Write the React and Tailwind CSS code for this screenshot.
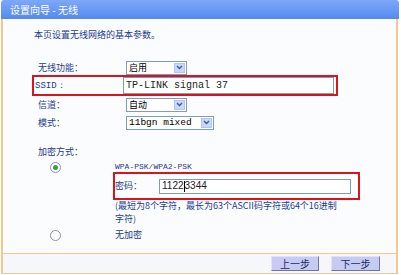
import React from 'react';

const cjk = "font-['Noto_Sans_CJK_SC',sans-serif]";
const mono = "font-['Liberation_Mono',monospace]";

const Arrow = () => (
  <div className="w-[11px] h-[10px] mr-[1px] bg-[#c9d8fa] border border-[#b3c6f0] flex items-center justify-center">
    <svg width="7" height="5" viewBox="0 0 7 5">
      <path d="M1 1 L3.5 3.5 L6 1" fill="none" stroke="#3d5a94" strokeWidth="1.4" />
    </svg>
  </div>
);

const Select = ({ value, width, font }) => (
  <div className={`${width} h-[14px] bg-white border border-[#7f9db9] flex items-center justify-between`}>
    <span className={`pl-[2px] text-black ${font}`}>{value}</span>
    <Arrow />
  </div>
);

const Radio = ({ checked }) => (
  <div className="w-[11px] h-[11px] rounded-full border border-[#8393ad] bg-white flex items-center justify-center">
    {checked && <div className="w-[5px] h-[5px] rounded-full bg-[#3c9f45]" />}
  </div>
);

const Row = ({ label, children }) => (
  <div className="flex items-center h-[15px] ml-[32px]">
    <div className="w-[91px] pl-[3px]">{label}</div>
    {children}
  </div>
);

export default function App() {
  return (
    <div className={`w-[401px] h-[275px] bg-white flex flex-col text-[9px] leading-[12px] text-[#1d3b8c] ${cjk}`}>
      <div className="h-[19px] ml-[1px] w-[398px] rounded-t-[3px] bg-gradient-to-b from-[#7ea8f8] to-[#5489ee] flex items-center pl-[9px] text-white text-[10px]">
        设置向导 - 无线
      </div>
      <div className="ml-[1px] w-[397px] flex-1 flex flex-col border-x-2 border-[#f3c88f]">
        <div className="flex-1 bg-[#fbfcfe] flex flex-col">
          <div className="mt-[10px] ml-[31px] h-[12px]">本页设置无线网络的基本参数。</div>
          <div className="mt-[19px]">
            <Row label="无线功能：">
              <Select value="启用" width="w-[61px]" font="" />
            </Row>
            <div className="ml-[29px] w-[306px] h-[21px] border-2 border-[#d6151f] flex items-center">
              <div className={`w-[89px] pl-[1px] ${mono} text-[9px]`}>SSID：</div>
              <div className={`w-[211px] h-[17px] bg-white border border-[#7f9db9] flex items-center pl-[2px] text-[#222] ${mono} text-[10px]`}>
                TP-LINK signal 37
              </div>
            </div>
            <div className="h-[1px]" />
            <Row label="信道：">
              <Select value="自动" width="w-[61px]" font="" />
            </Row>
            <div className="h-[3px]" />
            <Row label="模式：">
              <Select value="11bgn mixed" width="w-[88px]" font={`${mono} text-[9.5px]`} />
            </Row>
          </div>
          <div className="mt-[16px] ml-[32px] pl-[3px] h-[12px]">加密方式：</div>
          <div className="flex mt-[3px]">
            <div className="w-[110px] pl-[47px]">
              <div className="pt-[1px]"><Radio checked /></div>
            </div>
            <div className="flex flex-col">
              <div className={`h-[11px] pl-[2px] ${mono} text-[8px] leading-[11px]`}>WPA-PSK/WPA2-PSK</div>
              <div className="w-[247px] h-[28px] border-2 border-[#d6151f] flex items-center">
                <div className="w-[44px]">密码：</div>
                <div className="w-[192px] h-[15px] bg-white border border-[#7f9db9] flex items-center pl-[2px] text-[#222] font-['Liberation_Sans',sans-serif] text-[10px]">
                  1122<span className="inline-block w-px h-[11px] bg-black" />3344
                </div>
              </div>
              <div className="pl-[2px] leading-[13px] mt-[-1px]">
                (最短为8个字符，最长为63个ASCII码字符或64个16进制<br />字符)
              </div>
            </div>
          </div>
          <div className="flex mt-[4px] items-center h-[12px]">
            <div className="w-[110px] pl-[47px]">
              <Radio />
            </div>
            <div className="pl-[2px]">无加密</div>
          </div>
        </div>
        <div className="h-[20px] border-t border-[#f3c88f] bg-[#f6f7fb] flex items-center justify-end pr-[16px] gap-[12px]">
          <button className="w-[48px] h-[15px] bg-[#c6cbf3] border border-[#6e74a6] border-t-[#dfe2fb] border-l-[#dfe2fb] text-[10px] leading-[12px] text-[#1b2a66]">上一步</button>
          <button className="w-[49px] h-[15px] bg-[#c6cbf3] border border-[#6e74a6] border-t-[#dfe2fb] border-l-[#dfe2fb] text-[10px] leading-[12px] text-[#1b2a66]">下一步</button>
        </div>
        <div className="h-[1px] bg-[#f3c88f]" />
      </div>
      <div className="h-[1px]" />
    </div>
  );
}
